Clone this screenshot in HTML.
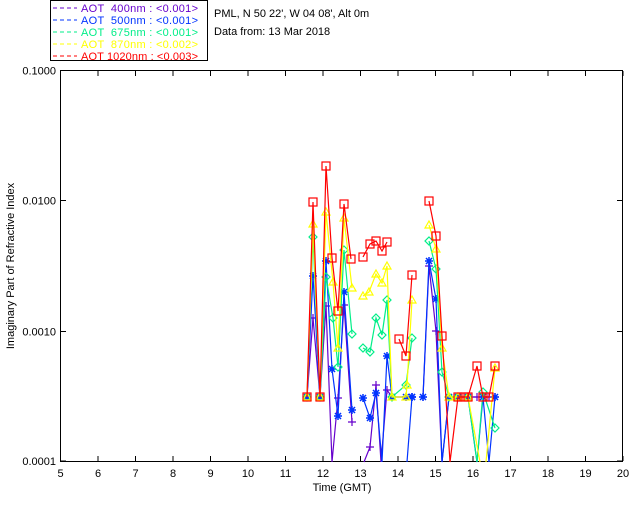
<!DOCTYPE html>
<html><head><meta charset="utf-8"><style>
html,body{margin:0;padding:0;background:#fff;width:640px;height:512px;overflow:hidden}
svg{display:block;font-family:"Liberation Sans",sans-serif;font-size:11px}
text{white-space:pre}
</style></head><body>
<svg id="s" width="640" height="512" viewBox="0 0 640 512" xmlns="http://www.w3.org/2000/svg">
<rect x="50.5" y="0.5" width="157" height="60" fill="#fff" stroke="#000"/>
<g font-size="11">
<line x1="53" y1="8" x2="77" y2="8" stroke="#6600cc" stroke-dasharray="4,3"/>
<text x="81" y="12" fill="#6600cc" textLength="117" xml:space="preserve">AOT  400nm : &lt;0.001&gt;</text>
<line x1="53" y1="20" x2="77" y2="20" stroke="#0033ff" stroke-dasharray="4,3"/>
<text x="81" y="24" fill="#0033ff" textLength="117" xml:space="preserve">AOT  500nm : &lt;0.001&gt;</text>
<line x1="53" y1="32" x2="77" y2="32" stroke="#00ee88" stroke-dasharray="4,3"/>
<text x="81" y="36" fill="#00ee88" textLength="117" xml:space="preserve">AOT  675nm : &lt;0.001&gt;</text>
<line x1="53" y1="44" x2="77" y2="44" stroke="#ffff00" stroke-dasharray="4,3"/>
<text x="81" y="48" fill="#ffff00" textLength="117" xml:space="preserve">AOT  870nm : &lt;0.002&gt;</text>
<line x1="53" y1="56" x2="77" y2="56" stroke="#ff0000" stroke-dasharray="4,3"/>
<text x="81" y="60" fill="#ff0000" textLength="117" xml:space="preserve">AOT 1020nm : &lt;0.003&gt;</text>
<text x="214" y="17" fill="#000">PML, N 50 22', W 04 08', Alt 0m</text>
<text x="214" y="35" fill="#000">Data from: 13 Mar 2018</text>
</g>
<rect x="60.5" y="70.5" width="562" height="391" fill="none" stroke="#000"/>
<g id="ax" stroke="#000"></g>
<g id="lab" fill="#000" font-size="11"></g>
<text x="342" y="491" text-anchor="middle" font-size="11">Time (GMT)</text>
<text transform="translate(14,266) rotate(-90)" text-anchor="middle" font-size="11">Imaginary Part of Refractive Index</text>
<g id="data" fill="none" stroke-width="1.2"></g>
</svg>
<script>
var NS="http://www.w3.org/2000/svg",ax=document.getElementById('ax'),lab=document.getElementById('lab'),dg=document.getElementById('data');
function el(t,a,p){var e=document.createElementNS(NS,t);for(var k in a)e.setAttribute(k,a[k]);(p||dg).appendChild(e);return e;}
for(var h=5;h<=20;h++){var x=60.5+37.5*(h-5);
 el('line',{x1:x,y1:461,x2:x,y2:456},ax);el('line',{x1:x,y1:71,x2:x,y2:76},ax);
 var t=el('text',{x:x,y:477,'text-anchor':'middle'},lab);t.textContent=h;}
var yl=[["0.1000",70.5],["0.0100",200.5],["0.0010",331.5],["0.0001",461]];
yl.forEach(function(a){el('line',{x1:61,y1:a[1],x2:66,y2:a[1]},ax);el('line',{x1:622,y1:a[1],x2:617,y2:a[1]},ax);
 var t=el('text',{x:56,y:a[1]+4,'text-anchor':'end'},lab);t.textContent=a[0];});
function series(col,segs,mk){
 segs.forEach(function(s){el('polyline',{points:s.map(function(p){return p.join(',')}).join(' '),stroke:col});
  s.forEach(function(p){if(p[1]<460)mk(p[0],p[1],col);});});}
function plus(x,y,c){el('path',{d:'M'+(x-4)+' '+y+'h8M'+x+' '+(y-4)+'v8',stroke:c});}
function ast(x,y,c){el('path',{d:'M'+(x-4)+' '+y+'h8M'+x+' '+(y-4)+'v8M'+(x-3)+' '+(y-3)+'l6 6M'+(x+3)+' '+(y-3)+'l-6 6',stroke:c,'stroke-width':1.5});}
function dia(x,y,c){el('path',{d:'M'+x+' '+(y-4)+'l4 4l-4 4l-4 -4z',stroke:c});}
function tri(x,y,c){el('path',{d:'M'+x+' '+(y-4)+'l4 7h-8z',stroke:c});}
function sq(x,y,c){el('rect',{x:x-4,y:y-4,width:8,height:8,stroke:c});}
var B=462;
series('#6600cc',[[[307,397],[313,318],[320,397],[326,306],[332,B],[338,398],[344,305],[352,422]],
 [[364,B],[370,447],[376,385],[381,B],[387,390],[392,397],[406,397],[412,397]],
 [[423,397],[429,266],[436,331],[442,B],[449,397],[458,397],[468,397],[477,397],[483,397],[489,397],[495,397]]],plus);
series('#0033ff',[[[307,397],[313,276],[320,397],[326,261],[332,369],[338,416],[344,292],[352,410]],
 [[363,398],[370,418],[376,393],[382,B],[387,356],[392,397],[406,397],[412,397]],
 [[407,B],[412,397]],
 [[423,397],[429,261],[436,299],[442,B],[449,397],[458,397],[468,397],[477,B],[483,397],[489,B],[495,397]]],ast);
series('#00ee88',[[[307,397],[313,237],[320,397],[326,277],[333,318],[338,367],[344,250],[352,334]],
 [[363,348],[370,352],[376,318],[382,335],[387,300],[392,397],[406,385],[412,338]],
 [[429,241],[436,269],[442,372],[449,397],[458,397],[468,397],[477,B],[483,392],[495,428]]],dia);
series('#ffff00',[[[307,397],[313,224],[320,397],[326,212],[333,282],[338,348],[344,218],[352,288]],
 [[363,296],[369,292],[376,274],[382,283],[387,266],[392,397],[406,397],[407,385],[412,300]],
 [[429,225],[436,249],[442,348],[449,397],[458,397],[468,397],[480,B]],[[486,B],[495,368]]],tri);
series('#ff0000',[[[307,397],[313,202],[320,397],[326,166],[332,258],[338,311],[344,204],[351,259]],
 [[363,257],[370,244],[376,241],[382,251],[387,242]],
 [[399,339],[406,356],[412,275]],
 [[429,201],[436,236],[442,336],[450,B],[458,397],[464,397],[468,397],[477,366],[483,397],[489,397],[495,366]]],sq);
</script>
</body></html>
